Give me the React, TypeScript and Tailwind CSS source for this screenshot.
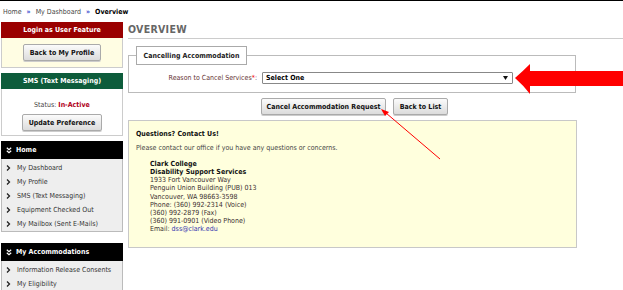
import React from "react";

const Btn = ({ children, w }: { children: React.ReactNode; w: string }) => (
  <div
    className={`${w} h-[17px] flex items-center justify-center border border-[#aaa] rounded-[2px] bg-gradient-to-b from-[#fbfbfb] to-[#dcdcdc] font-bold text-[#111] text-[7px] shadow-[0_1px_0_#ccc]`}
  >
    {children}
  </div>
);

const Chev = () => (
  <svg width="5" height="6" viewBox="0 0 5 6" className="shrink-0">
    <path d="M1 0.5 L3.5 3 L1 5.5" fill="none" stroke="#222" strokeWidth="1.3" />
  </svg>
);

const DblDown = () => (
  <svg width="6" height="7" viewBox="0 0 6 7" className="shrink-0">
    <path d="M0.8 0.8 L3 2.8 L5.2 0.8 M0.8 3.8 L3 5.8 L5.2 3.8" fill="none" stroke="#fff" strokeWidth="1.2" />
  </svg>
);

const NavPanel = ({ title, items }: { title: string; items: string[] }) => (
  <div>
    <div className="h-[18px] bg-black flex items-center gap-[4px] pl-[5px] text-white font-bold text-[7px]">
      <DblDown />
      <span>{title}</span>
    </div>
    <div className="bg-[#eeeeee] border-x border-b border-[#bbb] pt-[2px]">
      {items.map((t) => (
        <div key={t} className="h-[14px] flex items-center gap-[6px] pl-[4px] text-[#333]">
          <Chev />
          <span>{t}</span>
        </div>
      ))}
    </div>
  </div>
);

export default function App() {
  return (
    <div className="relative w-[623px] h-[290px] overflow-hidden bg-white border-t border-black font-['DejaVu_Sans_Condensed','DejaVu_Sans',sans-serif] text-[7px] leading-[8px] text-[#333]">
      {/* breadcrumb */}
      <div className="h-[21px] flex items-center pl-[3px] gap-[5px] text-[#444]">
        <span>Home</span>
        <span className="text-[#3344cc] font-bold">»</span>
        <span>My Dashboard</span>
        <span className="text-[#3344cc] font-bold">»</span>
        <span className="font-bold text-black">Overview</span>
      </div>

      <div className="flex">
        {/* sidebar */}
        <aside className="w-[122px] ml-[1px] flex flex-col">
          <div>
            <div className="h-[16px] bg-[#9a0000] flex items-center justify-center text-white font-bold">
              Login as User Feature
            </div>
            <div className="h-[30px] bg-[#fffde3] border-x border-b border-[#ccc] flex justify-center pt-[6px]">
              <Btn w="w-[78px]">Back to My Profile</Btn>
            </div>
          </div>

          <div className="mt-[5px]">
            <div className="h-[16px] bg-[#0d5c3b] flex items-center justify-center text-white font-bold">
              SMS (Text Messaging)
            </div>
            <div className="h-[47px] bg-white border-x border-b border-[#ccc] flex flex-col items-center pt-[12px]">
              <div className="text-[#444]">
                Status: <span className="font-bold text-[#b00020]">In-Active</span>
              </div>
              <div className="mt-[5px]">
                <Btn w="w-[80px]">Update Preference</Btn>
              </div>
            </div>
          </div>

          <div className="mt-[5px]">
            <NavPanel
              title="Home"
              items={["My Dashboard", "My Profile", "SMS (Text Messaging)", "Equipment Checked Out", "My Mailbox (Sent E-Mails)"]}
            />
          </div>

          <div className="mt-[11px]">
            <NavPanel title="My Accommodations" items={["Information Release Consents", "My Eligibility"]} />
          </div>
        </aside>

        {/* main */}
        <main className="flex-1 ml-[5px]">
          <div className="h-[17px] border-b border-[#ccc] text-[10.5px] leading-[14px] font-bold text-[#666] tracking-[0.3px]">
            OVERVIEW
          </div>

          <fieldset className="mt-[7px] w-[448px] border border-[#bbb] px-[7px] pt-[7px] pb-[8px]">
            <legend className="h-[19px] w-[111px] border border-[#aaa] bg-white flex items-center justify-center font-bold text-[#222]">
              Cancelling Accommodation
            </legend>
            <div className="flex items-center h-[12px]">
              <div className="w-[121px] text-right text-[#663333]">
                Reason to Cancel Services<span className="text-[#e00]">*</span>:
              </div>
              <div className="ml-[5px] w-[251px] h-[12px] border border-[#888] rounded-[1px] bg-white flex items-center justify-between pl-[3px] pr-[4px]">
                <span className="font-bold text-black">Select One</span>
                <svg width="5" height="4" viewBox="0 0 5 4">
                  <path d="M0 0 H5 L2.5 4 Z" fill="#111" />
                </svg>
              </div>
            </div>
          </fieldset>

          <div className="flex gap-[7px] mt-[5px] ml-[133px]">
            <Btn w="w-[125px]">Cancel Accommodation Request</Btn>
            <Btn w="w-[55px]">Back to List</Btn>
          </div>

          <div className="mt-[5px] w-[449px] h-[128px] bg-[#ffffdd] border border-[#c8c8c8] pl-[7px] pt-[9px]">
            <div className="font-bold text-[#111]">Questions? Contact Us!</div>
            <div className="mt-[6px] text-[#444]">Please contact our office if you have any questions or concerns.</div>
            <div className="mt-[8px] pl-[14px] leading-[8.15px] text-[#3a2e2e]">
              <div className="font-bold text-[#111]">Clark College</div>
              <div className="font-bold text-[#111]">Disability Support Services</div>
              <div>1933 Fort Vancouver Way</div>
              <div>Penguin Union Building (PUB) 013</div>
              <div>Vancouver, WA 98663-3598</div>
              <div>Phone: (360) 992-2314 (Voice)</div>
              <div>(360) 992-2879 (Fax)</div>
              <div>(360) 991-0901 (Video Phone)</div>
              <div>
                Email: <span className="text-[#3535b0]">dss@clark.edu</span>
              </div>
            </div>
          </div>
        </main>
      </div>

      {/* annotation overlays */}
      <svg className="absolute inset-0 pointer-events-none" width="623" height="290" viewBox="0 0 623 290">
        <path d="M515 77 Q523 70 530 63 L530 70 L623 70 L623 85 L530 85 L530 93 Q523 84 515 77 Z" fill="#ff0000" />
        <line x1="440" y1="158" x2="386" y2="112" stroke="#ff0000" strokeWidth="1" />
        <path d="M381 108 L389 111 L385 115 Z" fill="#ff0000" />
      </svg>
    </div>
  );
}
